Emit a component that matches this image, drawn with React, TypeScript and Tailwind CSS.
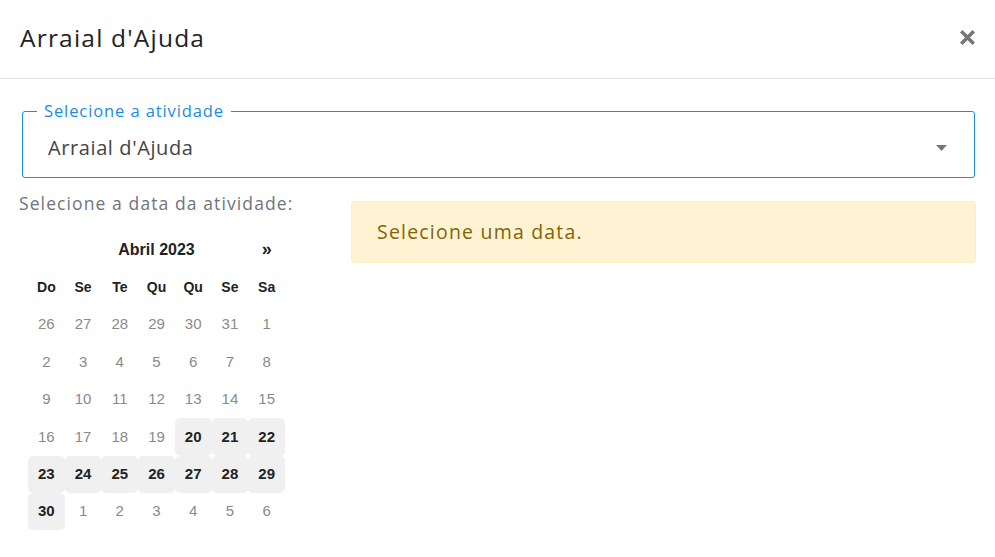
import React from 'react';

const font = { fontFamily: '"Open Sans", "Noto Sans", sans-serif' };

type Day = { n: number; active?: boolean };

const weeks: Day[][] = [
  [26, 27, 28, 29, 30, 31, 1].map((n) => ({ n })),
  [2, 3, 4, 5, 6, 7, 8].map((n) => ({ n })),
  [9, 10, 11, 12, 13, 14, 15].map((n) => ({ n })),
  [16, 17, 18, 19].map((n) => ({ n })).concat([20, 21, 22].map((n) => ({ n, active: true }))),
  [23, 24, 25, 26, 27, 28, 29].map((n) => ({ n, active: true })),
  [{ n: 30, active: true }].concat([1, 2, 3, 4, 5, 6].map((n) => ({ n }))),
];

const dayNames = ['Do', 'Se', 'Te', 'Qu', 'Qu', 'Se', 'Sa'];

const Calendar: React.FC = () => (
  <div className="ml-[28px] w-[257px] font-['Liberation_Sans',Arial,sans-serif] text-[15px]">
    <div className="grid grid-cols-7 h-[37px] items-center">
      <div className="col-span-1" />
      <div className="col-span-5 text-center font-bold text-[#222] text-[16px]">Abril 2023</div>
      <div className="text-center font-bold text-[#222] text-[18px]">»</div>
    </div>
    <div className="grid grid-cols-7 h-[38px] items-center">
      {dayNames.map((d, i) => (
        <div key={i} className="text-center font-bold text-[#222] text-[14px]">
          {d}
        </div>
      ))}
    </div>
    {weeks.map((w, wi) => (
      <div key={wi} className="grid grid-cols-7 h-[37.4px]">
        {w.map((d, di) => (
          <div
            key={di}
            className={
              d.active
                ? 'flex items-center justify-center rounded-[5px] bg-[#f0f0f0] font-bold text-[#222]'
                : 'flex items-center justify-center text-[#8a8a8a]'
            }
          >
            {d.n}
          </div>
        ))}
      </div>
    ))}
  </div>
);

export default function App() {
  return (
    <div className="w-[995px] h-[557px] bg-white overflow-hidden" style={font}>
      <div className="h-[79px] border-b border-[#dee2e6] flex items-center justify-between pl-[20px] pr-[20px]">
        <h5 className="text-[24.5px] text-[#222] tracking-[1.2px] -mt-[2px]">Arraial d'Ajuda</h5>
        <svg width="15" height="15" viewBox="0 0 15 15" className="-mt-[4px]">
          <path d="M2.5 2.5 L12.5 12.5 M12.5 2.5 L2.5 12.5" stroke="#777" strokeWidth="3.6" strokeLinecap="square" />
        </svg>
      </div>

      <div className="pl-[22px] pr-[20px] pt-[22px]">
        <fieldset className="border border-[#1a8ce3] rounded-[3px] h-[77px] px-[14px] relative">
          <legend className="px-[7px] text-[16.5px] text-[#1a8ce3] leading-[20px] tracking-[0.9px]">Selecione a atividade</legend>
          <div className="flex items-center justify-between h-[58px] pl-[11px] pr-[13px] -mt-[2px]">
            <span className="text-[20px] text-[#444] tracking-[0.6px]">Arraial d'Ajuda</span>
            <svg width="11" height="6" viewBox="0 0 11 6">
              <path d="M0 0 L11 0 L5.5 6 Z" fill="#777" />
            </svg>
          </div>
        </fieldset>
      </div>

      <div className="flex pl-[19px] pr-[19px] pt-[13px]">
        <div className="w-[332px] shrink-0">
          <div className="text-[17.5px] text-[#6c757d] leading-[24px] mb-[16px] tracking-[1.1px]">Selecione a data da atividade:</div>
          <div className="-ml-[19px]">
            <Calendar />
          </div>
        </div>
        <div className="flex-1 pt-[10px]">
          <div className="h-[62px] bg-[#fff3d4] border border-[#ffeec0] rounded-[4px] flex items-center pl-[25px] text-[19.5px] text-[#856404] tracking-[1.2px]">
            Selecione uma data.
          </div>
        </div>
      </div>
    </div>
  );
}
